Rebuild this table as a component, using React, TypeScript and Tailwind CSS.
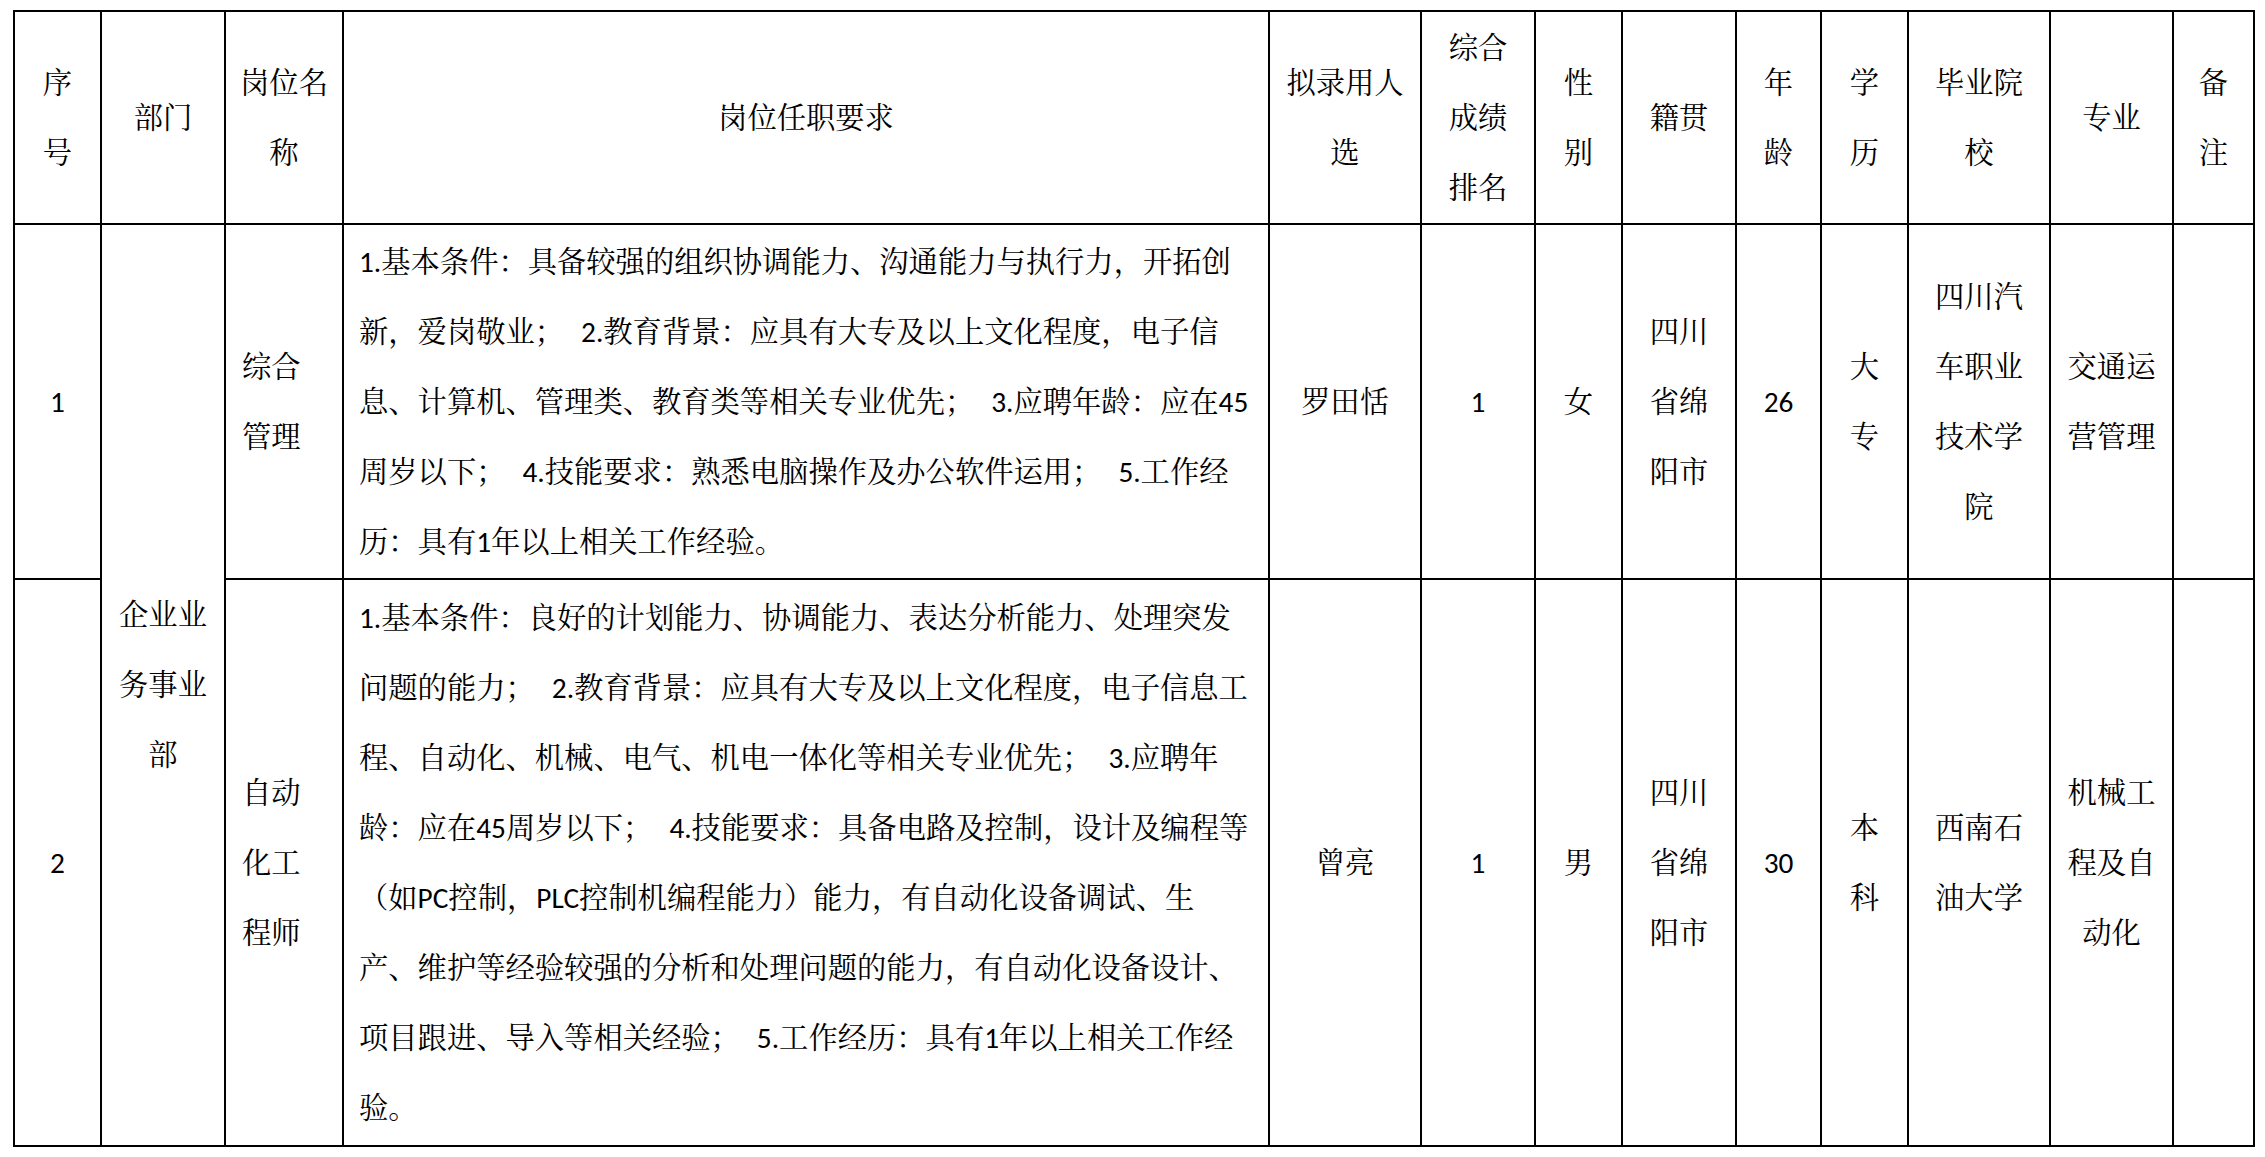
import { Fragment, type ReactNode } from "react";

const row1Lines = [
  "1.基本条件：具备较强的组织协调能力、沟通能力与执行力，开拓创",
  "新，爱岗敬业；|2.教育背景：应具有大专及以上文化程度，电子信",
  "息、计算机、管理类、教育类等相关专业优先；|3.应聘年龄：应在45",
  "周岁以下；|4.技能要求：熟悉电脑操作及办公软件运用；|5.工作经",
  "历：具有1年以上相关工作经验。",
];

const row2Lines = [
  "1.基本条件：良好的计划能力、协调能力、表达分析能力、处理突发",
  "问题的能力；|2.教育背景：应具有大专及以上文化程度，电子信息工",
  "程、自动化、机械、电气、机电一体化等相关专业优先；|3.应聘年",
  "龄：应在45周岁以下；|4.技能要求：具备电路及控制，设计及编程等",
  "（如PC控制，PLC控制机编程能力）能力，有自动化设备调试、生",
  "产、维护等经验较强的分析和处理问题的能力，有自动化设备设计、",
  "项目跟进、导入等相关经验；|5.工作经历：具有1年以上相关工作经",
  "验。",
];

// "|" marks the wide gap Word leaves after a full-width semicolon
function Line({ text }: { text: string }) {
  const parts = text.split("|");
  return (
    <div className="whitespace-nowrap">
      {parts.map((p, i) => (
        <Fragment key={i}>
          {i > 0 && <span className="inline-block w-[17px]" />}
          {p}
        </Fragment>
      ))}
    </div>
  );
}

function Stack({ lines }: { lines: string[] }) {
  return (
    <>
      {lines.map((l, i) => (
        <div key={i} className="whitespace-nowrap">
          {l}
        </div>
      ))}
    </>
  );
}

function Td({
  children,
  left,
  rowSpan,
}: {
  children?: ReactNode;
  left?: boolean;
  rowSpan?: number;
}) {
  return (
    <td
      rowSpan={rowSpan}
      className={`border-2 border-black p-0 align-middle ${left ? "pl-[16px] text-left" : "text-center"}`}
    >
      {children}
    </td>
  );
}

export default function App() {
  return (
    <div className="min-h-[1157px] w-[2265px] bg-white pl-[13px] pt-[10px] font-['Carlito','Lato','Noto_Serif_CJK_SC','Noto_Sans_CJK_SC',sans-serif] text-[29.3px] leading-[70px] text-black">
      <table className="w-[2242px] table-fixed border-collapse border-2 border-black">
        <colgroup>
          <col className="w-[87px]" />
          <col className="w-[124px]" />
          <col className="w-[118px]" />
          <col className="w-[926px]" />
          <col className="w-[152px]" />
          <col className="w-[114px]" />
          <col className="w-[87px]" />
          <col className="w-[114px]" />
          <col className="w-[85px]" />
          <col className="w-[87px]" />
          <col className="w-[142px]" />
          <col className="w-[123px]" />
          <col className="w-[81px]" />
        </colgroup>
        <tbody>
          <tr className="h-[213px]">
            <Td><Stack lines={["序", "号"]} /></Td>
            <Td>部门</Td>
            <Td><Stack lines={["岗位名", "称"]} /></Td>
            <Td>岗位任职要求</Td>
            <Td><Stack lines={["拟录用人", "选"]} /></Td>
            <Td><Stack lines={["综合", "成绩", "排名"]} /></Td>
            <Td><Stack lines={["性", "别"]} /></Td>
            <Td>籍贯</Td>
            <Td><Stack lines={["年", "龄"]} /></Td>
            <Td><Stack lines={["学", "历"]} /></Td>
            <Td><Stack lines={["毕业院", "校"]} /></Td>
            <Td>专业</Td>
            <Td><Stack lines={["备", "注"]} /></Td>
          </tr>
          <tr className="h-[355px]">
            <Td>1</Td>
            <Td rowSpan={2}><Stack lines={["企业业", "务事业", "部"]} /></Td>
            <Td left><Stack lines={["综合", "管理"]} /></Td>
            <td className="border-2 border-black p-0 pl-[15px] text-left align-middle">
              {row1Lines.map((l, i) => (
                <Line key={i} text={l} />
              ))}
            </td>
            <Td>罗田恬</Td>
            <Td>1</Td>
            <Td>女</Td>
            <Td><Stack lines={["四川", "省绵", "阳市"]} /></Td>
            <Td>26</Td>
            <Td><Stack lines={["大", "专"]} /></Td>
            <Td><Stack lines={["四川汽", "车职业", "技术学", "院"]} /></Td>
            <Td><Stack lines={["交通运", "营管理"]} /></Td>
            <Td />
          </tr>
          <tr className="h-[567px]">
            <Td>2</Td>
            <Td left><Stack lines={["自动", "化工", "程师"]} /></Td>
            <td className="border-2 border-black p-0 pl-[15px] text-left align-middle">
              {row2Lines.map((l, i) => (
                <Line key={i} text={l} />
              ))}
            </td>
            <Td>曾亮</Td>
            <Td>1</Td>
            <Td>男</Td>
            <Td><Stack lines={["四川", "省绵", "阳市"]} /></Td>
            <Td>30</Td>
            <Td><Stack lines={["本", "科"]} /></Td>
            <Td><Stack lines={["西南石", "油大学"]} /></Td>
            <Td><Stack lines={["机械工", "程及自", "动化"]} /></Td>
            <Td />
          </tr>
        </tbody>
      </table>
    </div>
  );
}
